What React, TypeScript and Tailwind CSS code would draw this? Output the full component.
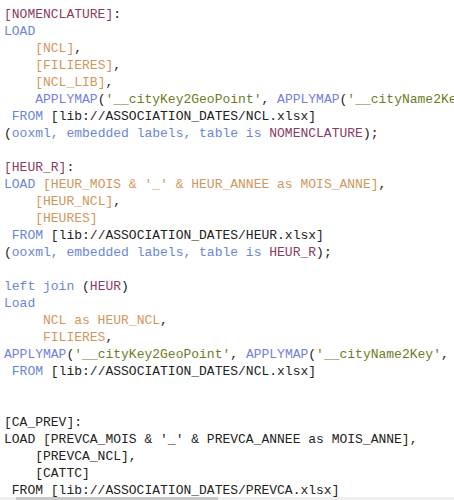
type Seg = [string, string];

// token colours of the script editor
const K = "text-[#6a86d6]"; // keywords
const F = "text-[#d1975c]"; // field names
const T = "text-[#8a3b62]"; // table labels
const S = "text-[#6b7d25]"; // strings
const M = "text-[#7480e0]"; // functions
const P = "text-[#222222]"; // plain

const lines: Seg[][] = [
  [["[NOMENCLATURE]", T], [":", P]],
  [["LOAD", K]],
  [["    ", P], ["[NCL]", F], [",", P]],
  [["    ", P], ["[FILIERES]", F], [",", P]],
  [["    ", P], ["[NCL_LIB]", F], [",", P]],
  [["    ", P], ["APPLYMAP", M], ["(", P], ["'__cityKey2GeoPoint'", S], [", ", P], ["APPLYMAP", M], ["(", P], ["'__cityName2Key'", S], [", [NCL_LIB]))", P]],
  [[" ", P], ["FROM", K], [" [lib://ASSOCIATION_DATES/NCL.xlsx]", P]],
  [["(", P], ["ooxml, embedded labels, table is", K], [" ", P], ["NOMENCLATURE", T], [");", P]],
  [],
  [["[HEUR_R]", T], [":", P]],
  [["LOAD", K], [" ", P], ["[HEUR_MOIS & '_' & HEUR_ANNEE as MOIS_ANNE]", F], [",", P]],
  [["    ", P], ["[HEUR_NCL]", F], [",", P]],
  [["    ", P], ["[HEURES]", F]],
  [[" ", P], ["FROM", K], [" [lib://ASSOCIATION_DATES/HEUR.xlsx]", P]],
  [["(", P], ["ooxml, embedded labels, table is", K], [" ", P], ["HEUR_R", T], [");", P]],
  [],
  [["left join", K], [" (", P], ["HEUR", T], [")", P]],
  [["Load", K]],
  [["     ", P], ["NCL as HEUR_NCL", F], [",", P]],
  [["     ", P], ["FILIERES", F], [",", P]],
  [["APPLYMAP", M], ["(", P], ["'__cityKey2GeoPoint'", S], [", ", P], ["APPLYMAP", M], ["(", P], ["'__cityName2Key'", S], [", NCL))", P]],
  [[" ", P], ["FROM", K], [" [lib://ASSOCIATION_DATES/NCL.xlsx]", P]],
  [],
  [],
  [["[CA_PREV]:", P]],
  [["LOAD [PREVCA_MOIS & '_' & PREVCA_ANNEE as MOIS_ANNE],", P]],
  [["    [PREVCA_NCL],", P]],
  [["    [CATTC]", P]],
  [[" FROM [lib://ASSOCIATION_DATES/PREVCA.xlsx]", P]],
];

const App = () => {
  return (
    <div className="w-[454px] h-[500px] bg-white flex flex-col overflow-hidden">
      <div
        className="flex-1 overflow-hidden pt-[6px] pl-[4px] text-[13px] leading-[17px] whitespace-pre"
        style={{ fontFamily: '"Courier New", "Nimbus Mono PS", "Nimbus Mono L", FreeMono, "Liberation Mono", monospace' }}
      >
        {lines.map((line, i) => (
          <div key={i} className="h-[17px]">
            {line.map(([txt, cls], j) => (
              <span key={j} className={cls}>{txt}</span>
            ))}
          </div>
        ))}
      </div>
      <div className="h-[3px] bg-[#f0f0f0] flex">
        <div className="ml-[16px] w-[202px] bg-[#c8c8c8]" />
      </div>
    </div>
  );
};

export default App;
